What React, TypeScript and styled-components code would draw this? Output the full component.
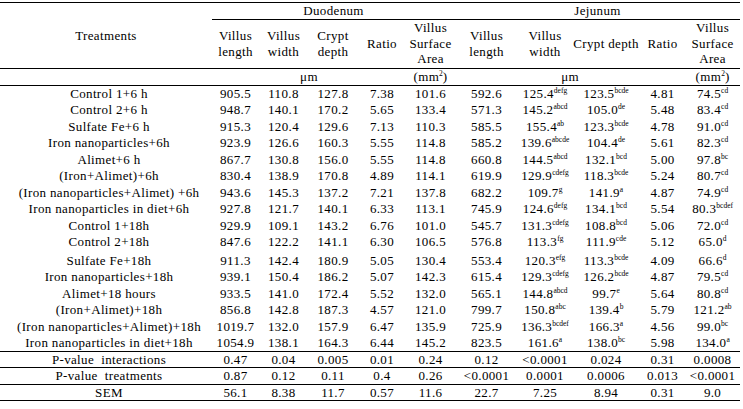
import React from 'react';
import styled, { createGlobalStyle } from 'styled-components';

const GlobalStyle = createGlobalStyle`
  html, body {
    margin: 0;
    padding: 0;
    background: #ffffff;
  }
  body {
    font-family: "Liberation Serif", "Times New Roman", serif;
    color: #000000;
  }
`;

const Table = styled.table`
  margin-top: 2px;
  width: 740px;
  border-collapse: collapse;
  table-layout: fixed;
  font-size: 13px;
  line-height: 15.5px;
  letter-spacing: 0.35px;
  border-top: 1px solid #000;
`;

const HeadCell = styled.th<{ $underline?: boolean }>`
  font-weight: normal;
  text-align: center;
  vertical-align: middle;
  padding: 0;
  border-bottom: ${(p) => (p.$underline ? '1px solid #000' : 'none')};
`;

const HeadRow = styled.tr<{ $h: number; $line?: boolean }>`
  height: ${(p) => p.$h}px;
  border-bottom: ${(p) => (p.$line ? '1px solid #000' : 'none')};
`;

const BodyRow = styled.tr<{ $footer?: boolean }>`
  height: ${(p) => (p.$footer ? 16.6 : 16.5)}px;
  border-top: ${(p) => (p.$footer ? '1px solid #000' : 'none')};

  &:last-child {
    border-bottom: ${(p) => (p.$footer ? '1px solid #000' : 'none')};
  }
`;

const Label = styled.td<{ $shift?: boolean }>`
  text-align: center;
  padding: ${(p) => (p.$shift ? '3px 0 0 6px' : '0 0 0 6px')};
  white-space: pre;
`;

const Num = styled.td<{ $shift?: boolean }>`
  text-align: center;
  padding: ${(p) => (p.$shift ? '3px 0 0 0' : '0')};
  white-space: nowrap;
`;

const Sup = styled.sup`
  font-size: 7.5px;
  letter-spacing: 0;
  line-height: 0;
  vertical-align: 5px;
`;

const widths = [212, 47, 49, 50, 48, 49, 63, 54, 68, 45, 55];

type Row = [string, string[]];

const rows: Row[] = [
  ['Control 1+6 h', ['905.5', '110.8', '127.8', '7.38', '101.6', '592.6', '125.4^defg', '123.5^bcde', '4.81', '74.5^cd']],
  ['Control 2+6 h', ['948.7', '140.1', '170.2', '5.65', '133.4', '571.3', '145.2^abcd', '105.0^de', '5.48', '83.4^cd']],
  ['Sulfate Fe+6 h', ['915.3', '120.4', '129.6', '7.13', '110.3', '585.5', '155.4^ab', '123.3^bcde', '4.78', '91.0^cd']],
  ['Iron nanoparticles+6h', ['923.9', '126.6', '160.3', '5.55', '114.8', '585.2', '139.6^abcde', '104.4^de', '5.61', '82.3^cd']],
  ['Alimet+6 h', ['867.7', '130.8', '156.0', '5.55', '114.8', '660.8', '144.5^abcd', '132.1^bcd', '5.00', '97.8^bc']],
  ['(Iron+Alimet)+6h', ['830.4', '138.9', '170.8', '4.89', '114.1', '619.9', '129.9^cdefg', '118.3^bcde', '5.24', '80.7^cd']],
  ['(Iron nanoparticles+Alimet) +6h', ['943.6', '145.3', '137.2', '7.21', '137.8', '682.2', '109.7^g', '141.9^a', '4.87', '74.9^cd']],
  ['Iron nanoparticles in diet+6h', ['927.8', '121.7', '140.1', '6.33', '113.1', '745.9', '124.6^defg', '134.1^bcd', '5.54', '80.3^bcdef']],
  ['Control 1+18h', ['929.9', '109.1', '143.2', '6.76', '101.0', '545.7', '131.3^cdefg', '108.8^bcd', '5.06', '72.0^cd']],
  ['Control 2+18h', ['847.6', '122.2', '141.1', '6.30', '106.5', '576.8', '113.3^fg', '111.9^cde', '5.12', '65.0^d']],
  ['Sulfate Fe+18h', ['911.3', '142.4', '180.9', '5.05', '130.4', '553.4', '120.3^efg', '113.3^bcde', '4.09', '66.6^d']],
  ['Iron nanoparticles+18h', ['939.1', '150.4', '186.2', '5.07', '142.3', '615.4', '129.3^cdefg', '126.2^bcde', '4.87', '79.5^cd']],
  ['Alimet+18 hours', ['933.5', '141.0', '172.4', '5.52', '132.0', '565.1', '144.8^abcd', '99.7^e', '5.64', '80.8^cd']],
  ['(Iron+Alimet)+18h', ['856.8', '142.8', '187.3', '4.57', '121.0', '799.7', '150.8^abc', '139.4^b', '5.79', '121.2^ab']],
  ['(Iron nanoparticles+Alimet)+18h', ['1019.7', '132.0', '157.9', '6.47', '135.9', '725.9', '136.3^bcdef', '166.3^a', '4.56', '99.0^bc']],
  ['Iron nanoparticles in diet+18h', ['1054.9', '138.1', '164.3', '6.44', '145.2', '823.5', '161.6^a', '138.0^bc', '5.98', '134.0^a']],
];

const footer: Row[] = [
  ['P-value  interactions', ['0.47', '0.04', '0.005', '0.01', '0.24', '0.12', '<0.0001', '0.024', '0.31', '0.0008']],
  ['P-value  treatments', ['0.87', '0.12', '0.11', '0.4', '0.26', '<0.0001', '0.0001', '0.0006', '0.013', '<0.0001']],
  ['SEM', ['56.1', '8.38', '11.7', '0.57', '11.6', '22.7', '7.25', '8.94', '0.31', '9.0']],
];

const Value = ({ text, shift }: { text: string; shift?: boolean }) => {
  const [main, sup] = text.split('^');
  return (
    <Num $shift={shift}>
      {main}
      {sup && <Sup>{sup}</Sup>}
    </Num>
  );
};

const Mm2 = () => (
  <>
    (mm<Sup>2</Sup>)
  </>
);

export default function App() {
  return (
    <>
      <GlobalStyle />
      <Table>
        <colgroup>
          {widths.map((w, i) => (
            <col key={i} style={{ width: w }} />
          ))}
        </colgroup>
        <thead>
          <HeadRow $h={16}>
            <HeadCell rowSpan={2}>Treatments</HeadCell>
            <HeadCell colSpan={5} $underline>Duodenum</HeadCell>
            <HeadCell colSpan={5} $underline>Jejunum</HeadCell>
          </HeadRow>
          <HeadRow $h={49} $line>
            <HeadCell>Villus<br />length</HeadCell>
            <HeadCell>Villus<br />width</HeadCell>
            <HeadCell>Crypt<br />depth</HeadCell>
            <HeadCell>Ratio</HeadCell>
            <HeadCell>Villus<br />Surface<br />Area</HeadCell>
            <HeadCell>Villus<br />length</HeadCell>
            <HeadCell>Villus<br />width</HeadCell>
            <HeadCell>Crypt depth</HeadCell>
            <HeadCell>Ratio</HeadCell>
            <HeadCell>Villus<br />Surface<br />Area</HeadCell>
          </HeadRow>
          <HeadRow $h={17} $line>
            <HeadCell />
            <HeadCell colSpan={4}>μm</HeadCell>
            <HeadCell><Mm2 /></HeadCell>
            <HeadCell colSpan={4}>μm</HeadCell>
            <HeadCell><Mm2 /></HeadCell>
          </HeadRow>
        </thead>
        <tbody>
          {rows.map(([name, vals]) => {
            const shift = name === 'Sulfate Fe+18h';
            return (
              <BodyRow key={name}>
                <Label $shift={shift}>{name}</Label>
                {vals.map((v, i) => (
                  <Value key={i} text={v} shift={shift} />
                ))}
              </BodyRow>
            );
          })}
        </tbody>
        <tbody>
          {footer.map(([name, vals]) => (
            <BodyRow key={name} $footer>
              <Label>{name}</Label>
              {vals.map((v, i) => (
                <Value key={i} text={v} />
              ))}
            </BodyRow>
          ))}
        </tbody>
      </Table>
    </>
  );
}
